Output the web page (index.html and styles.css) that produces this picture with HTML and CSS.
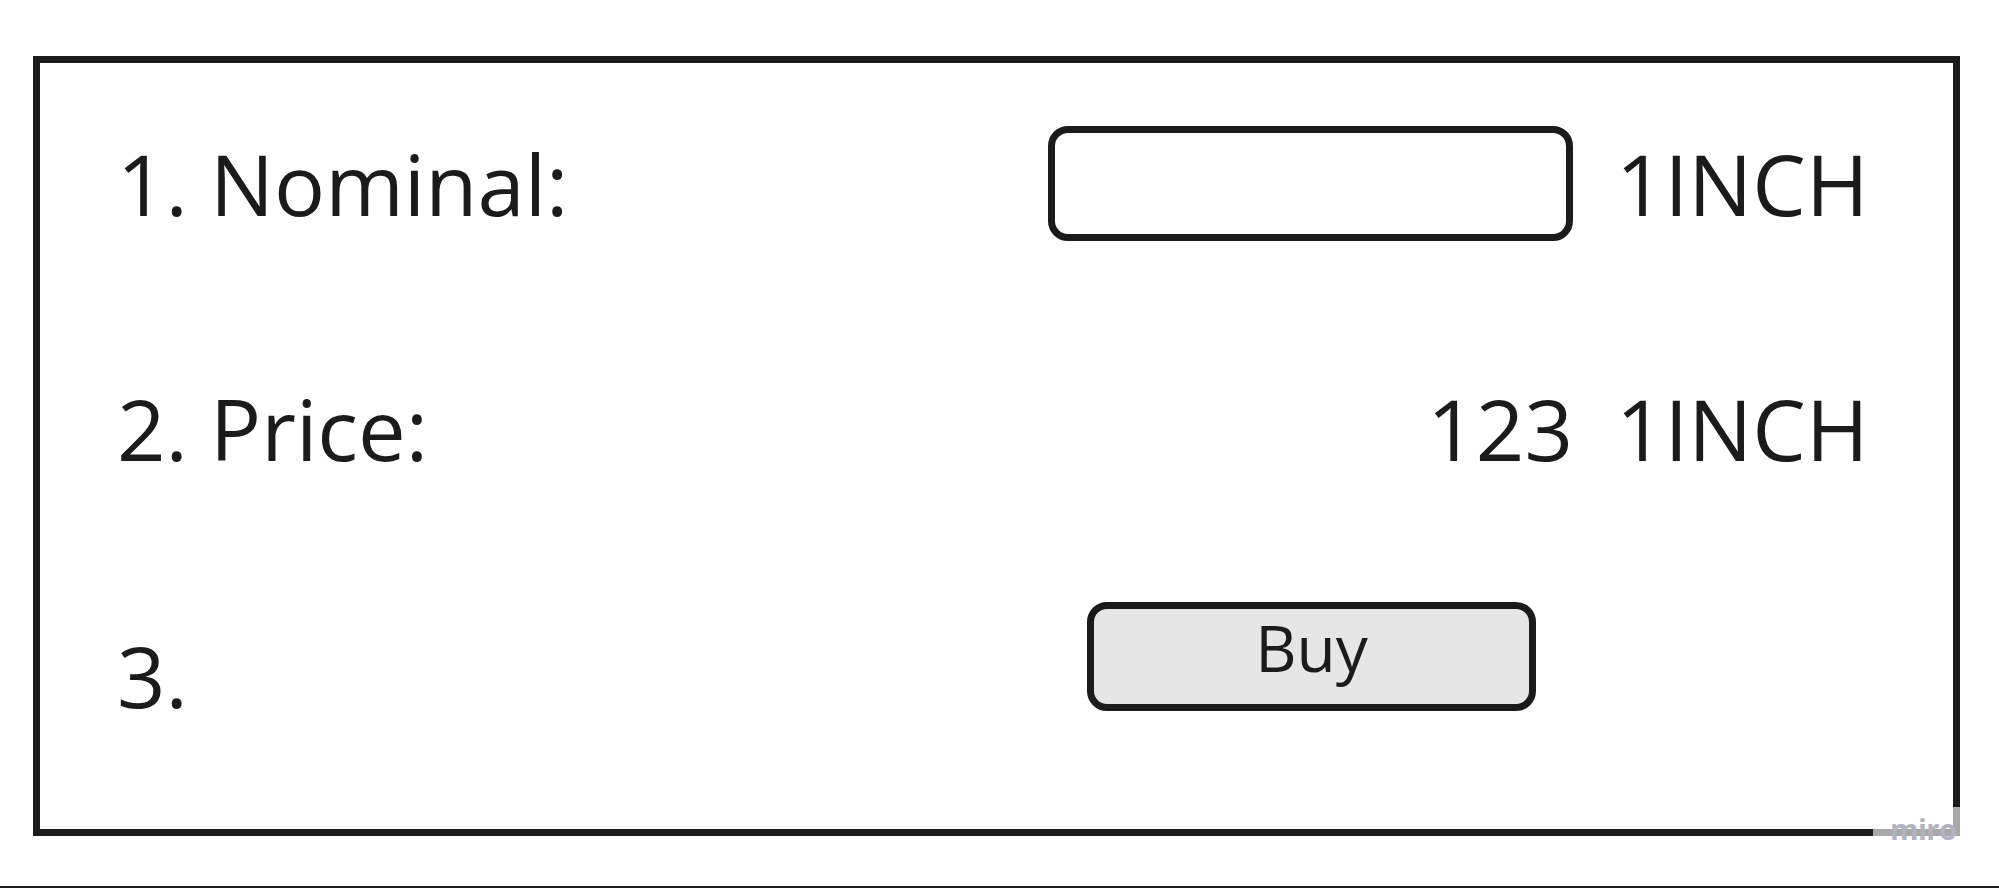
FILE: index.html
```html
<!DOCTYPE html>
<html lang="en">
<head>
<meta charset="utf-8">
<title>Buy form</title>
<link rel="stylesheet" href="styles.css">
</head>
<body>
<div class="page">
  <main class="board">
    <section class="card">
      <div class="row row-nominal">
        <div class="label">1. Nominal:</div>
        <div class="value"><div class="input"></div></div>
        <div class="unit">1INCH</div>
      </div>
      <div class="row row-price">
        <div class="label">2. Price:</div>
        <div class="value value-text">123</div>
        <div class="unit">1INCH</div>
      </div>
      <div class="row row-action">
        <div class="label label-action">3.</div>
        <div class="value"><div class="button">Buy</div></div>
        <div class="unit"></div>
      </div>
    </section>
  </main>
  <div class="bottom-line"></div>
  <div class="watermark"><span class="watermark-text">miro</span></div>
</div>
</body>
</html>
```

FILE: styles.css
```css
html, body {
  margin: 0;
  padding: 0;
  background: #ffffff;
}

body {
  font-family: "Open Sans", "Noto Sans", sans-serif;
  color: #1b1b1b;
}

.page {
  position: relative;
  width: 1999px;
  height: 888px;
  display: flex;
  flex-direction: column;
  overflow: hidden;
}

.board {
  flex: 1;
  padding: 56px 0 0 33px;
}

.card {
  box-sizing: border-box;
  width: 1927px;
  height: 780px;
  border: 7px solid #1b1b1b;
  padding: 62px 0 0 77px;
  display: flex;
  flex-direction: column;
}

.row {
  display: grid;
  grid-template-columns: 931px 525px 1fr;
  align-items: center;
  height: 116px;
  font-size: 85px;
  line-height: normal;
}

.row-price {
  margin-top: 129px;
}

.row-action {
  margin-top: 116px;
  align-items: start;
  height: 109px;
}

.label {
  white-space: nowrap;
}

.label-action {
  padding-top: 15px;
}

.value {
  display: flex;
  justify-content: flex-end;
}

.value-text {
  text-align: right;
}

.unit {
  padding-left: 43px;
  white-space: nowrap;
}

.input {
  box-sizing: border-box;
  width: 525px;
  height: 115px;
  border: 7px solid #1b1b1b;
  border-radius: 20px;
  background: #ffffff;
}

.button {
  box-sizing: border-box;
  width: 449px;
  height: 109px;
  margin-right: 37px;
  border: 7px solid #1b1b1b;
  border-radius: 20px;
  background: #e6e6e6;
  font-size: 64px;
  line-height: 70px;
  padding-top: 4px;
  text-align: center;
}

.bottom-line {
  height: 2px;
  background: #1e1e1e;
}

.watermark {
  position: absolute;
  left: 1873px;
  top: 807px;
  width: 100px;
  height: 45px;
  box-sizing: border-box;
  padding: 8px 0 0 17px;
  background: rgba(255, 255, 255, 0.62);
}

.watermark-text {
  display: block;
  font-size: 29px;
  font-weight: 700;
  line-height: 28px;
  color: #b3b3bf;
  letter-spacing: -0.5px;
}
```
